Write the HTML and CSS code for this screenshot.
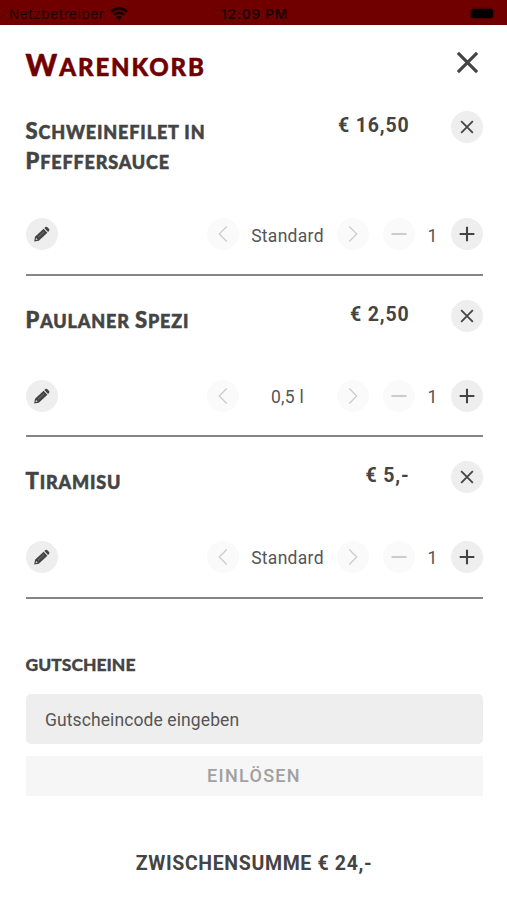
FILE: index.html
```html
<!DOCTYPE html>
<html lang="de">
<head>
<meta charset="utf-8">
<title>Warenkorb</title>
<link rel="stylesheet" href="styles.css">
</head>
<body>
<svg class="defs" aria-hidden="true">
  <symbol id="close" viewBox="0 0 24 24"><path d="M2 2 22 22M22 2 2 22"/></symbol>
  <symbol id="plus" viewBox="0 0 24 24"><path d="M12 3.2V20.8M3.2 12H20.8"/></symbol>
  <symbol id="minus" viewBox="0 0 24 24"><path d="M3 12H21"/></symbol>
  <symbol id="left" viewBox="0 0 24 24"><path d="M16.5 3 7.5 12 16.5 21"/></symbol>
  <symbol id="right" viewBox="0 0 24 24"><path d="M7.5 3 16.5 12 7.5 21"/></symbol>
  <symbol id="pencil" viewBox="0 0 16 16"><path fill="currentColor" stroke="none" fill-rule="evenodd" d="M.2 15.4 1 10.8 9.6 2.8 13.4 6.7 4.8 14.8ZM2 12 1.7 13.9 3.7 13.6ZM10.3 2.1 11.5 1Q12.3.3 13.1 1.1L15.1 3.1Q15.8 3.9 15.1 4.8L14.1 6Z"/><path d="M4 11.3 10 5.7" stroke="#999" stroke-width=".6"/></symbol>
</svg>
<header class="status">
  <span class="carrier">Netzbetreiber</span>
  <svg class="wifi" viewBox="0 0 18 13"><path d="M1 4.6Q9-2 17 4.6M3.9 7.8Q9 3.4 14.1 7.8"/><path class="dot" d="M6 9.9Q9 7.4 12 9.9L9 13Z"/></svg>
  <span class="clock">12:09 PM</span>
  <span class="battery"></span>
</header>
<main class="cart">
  <div class="head">
    <h1 class="caps"><span class="initial">W</span>arenkorb</h1>
    <svg class="icon head-close"><use href="#close"/></svg>
  </div>
  <section class="item first">
    <div class="top">
      <h2 class="caps"><span class="initial">S</span>chweinefilet in<br><span class="initial">P</span>feffersauce</h2>
      <span class="price">€ 16,50</span>
      <button class="round"><svg class="icon x"><use href="#close"/></svg></button>
    </div>
    <div class="controls">
      <button class="round edit"><svg class="icon pencil"><use href="#pencil"/></svg></button>
      <button class="round off"><svg class="icon"><use href="#left"/></svg></button>
      <span class="variant">Standard</span>
      <button class="round off"><svg class="icon"><use href="#right"/></svg></button>
      <button class="round off less"><svg class="icon bar"><use href="#minus"/></svg></button>
      <span class="count">1</span>
      <button class="round"><svg class="icon bar"><use href="#plus"/></svg></button>
    </div>
  </section>
  <section class="item">
    <div class="top">
      <h2 class="caps"><span class="initial">P</span>aulaner <span class="initial">S</span>pezi</h2>
      <span class="price">€ 2,50</span>
      <button class="round"><svg class="icon x"><use href="#close"/></svg></button>
    </div>
    <div class="controls">
      <button class="round edit"><svg class="icon pencil"><use href="#pencil"/></svg></button>
      <button class="round off"><svg class="icon"><use href="#left"/></svg></button>
      <span class="variant">0,5 l</span>
      <button class="round off"><svg class="icon"><use href="#right"/></svg></button>
      <button class="round off less"><svg class="icon bar"><use href="#minus"/></svg></button>
      <span class="count">1</span>
      <button class="round"><svg class="icon bar"><use href="#plus"/></svg></button>
    </div>
  </section>
  <section class="item">
    <div class="top">
      <h2 class="caps"><span class="initial">T</span>iramisu</h2>
      <span class="price">€ 5,-</span>
      <button class="round"><svg class="icon x"><use href="#close"/></svg></button>
    </div>
    <div class="controls">
      <button class="round edit"><svg class="icon pencil"><use href="#pencil"/></svg></button>
      <button class="round off"><svg class="icon"><use href="#left"/></svg></button>
      <span class="variant">Standard</span>
      <button class="round off"><svg class="icon"><use href="#right"/></svg></button>
      <button class="round off less"><svg class="icon bar"><use href="#minus"/></svg></button>
      <span class="count">1</span>
      <button class="round"><svg class="icon bar"><use href="#plus"/></svg></button>
    </div>
  </section>
  <h3 class="voucher-title">GUTSCHEINE</h3>
  <div class="voucher-input">Gutscheincode eingeben</div>
  <button class="redeem">EINLÖSEN</button>
  <p class="total">ZWISCHENSUMME € 24,-</p>
</main>
</body>
</html>
```

FILE: styles.css
```css
* { box-sizing: border-box; margin: 0; padding: 0; }
body { width: 507px; height: 900px; overflow: hidden; background: #fff; color: #444; font-family: Roboto, "Noto Sans", sans-serif; }
button { border: 0; font: inherit; color: inherit; }
.defs { position: absolute; width: 0; height: 0; }

.status { display: grid; grid-template-columns: 95px 18px 1fr 24px; column-gap: 6px; align-items: center; height: 25px; padding: 3px 12px 0 9px; background: #700000; color: #1c0000; font: 13.5px/22px Inter, sans-serif; }
.carrier { letter-spacing: .6px; white-space: nowrap; }
.wifi { width: 18px; height: 13px; margin-top: -2px; fill: none; stroke: #160000; stroke-width: 2.7; }
.wifi .dot { fill: #160000; stroke: none; }
.clock { padding-left: 87px; font-weight: 600; font-size: 13.5px; letter-spacing: .8px; }
.battery { width: 22px; height: 9px; margin-top: -2px; border-radius: 3px; background: #000; box-shadow: 0 0 3px #200000; }

.cart { padding: 0 24.5px 0 25.5px; }
.head { display: flex; justify-content: space-between; height: 86px; padding-top: 24px; }
.caps { font-family: Lato, sans-serif; font-weight: 900; text-transform: uppercase; white-space: nowrap; -webkit-text-stroke: .5px currentColor; }
h1.caps { color: #700000; font-size: 24px; line-height: 36px; letter-spacing: 1.9px; }
h1 .initial { font-size: 30px; line-height: 30px; }
h2.caps { flex: 1; padding-top: 7px; font-size: 18px; line-height: 29.5px; letter-spacing: .85px; }
h2 .initial { font-size: 22px; line-height: 22px; }
.icon { display: block; width: 20px; height: 20px; fill: none; stroke: currentColor; stroke-width: 1.5; overflow: visible; }
.head-close { width: 23px; height: 23px; margin: 2px 4px 0 0; stroke-width: 3.3; }

.item { height: 161.3px; padding-top: 24px; border-bottom: 2px solid #858585; }
.item.first { height: 165px; padding-top: 0; }
.top { display: flex; height: 79.5px; }
.first .top { height: 107px; }
.price { width: 120px; margin-right: 41px; padding-top: 1px; font-size: 19.5px; font-weight: 700; line-height: 28px; letter-spacing: .85px; text-align: right; }
.round { flex: none; display: flex; align-items: center; justify-content: center; width: 32px; height: 32px; border-radius: 50%; background: #eee; }
.x { width: 14px; height: 14px; stroke-width: 3.1; }
.bar { stroke-width: 2.5; }
.pencil { width: 16px; height: 16px; }
.off { background: #fafafa; color: #ccc; }
.controls { display: flex; align-items: center; color: #555; font-size: 17.5px; }
.edit { margin-right: auto; color: #444; }
.variant { width: 98px; padding-top: 3px; text-align: center; letter-spacing: .3px; }
.less { margin-left: 14px; }
.count { width: 36px; padding-top: 3px; text-align: center; }
.controls .round:last-child { color: #444; }

.voucher-title { margin-top: 53px; font-family: Lato, sans-serif; font-size: 17.5px; font-weight: 900; line-height: 26px; -webkit-text-stroke: .3px currentColor; }
.voucher-input { height: 50px; margin-top: 16px; padding: 0 19.5px; border-radius: 5px; background: #eee; color: #555; font-size: 17.5px; line-height: 52px; letter-spacing: .1px; }
.redeem { display: block; width: 100%; height: 40px; margin-top: 12px; background: #f6f6f6; color: #a0a0a0; font-size: 18px; font-weight: 500; letter-spacing: 1.3px; text-align: center; }
.total { margin-top: 54px; font-size: 19.5px; font-weight: 700; line-height: 28px; text-align: center; letter-spacing: .65px; }
```
